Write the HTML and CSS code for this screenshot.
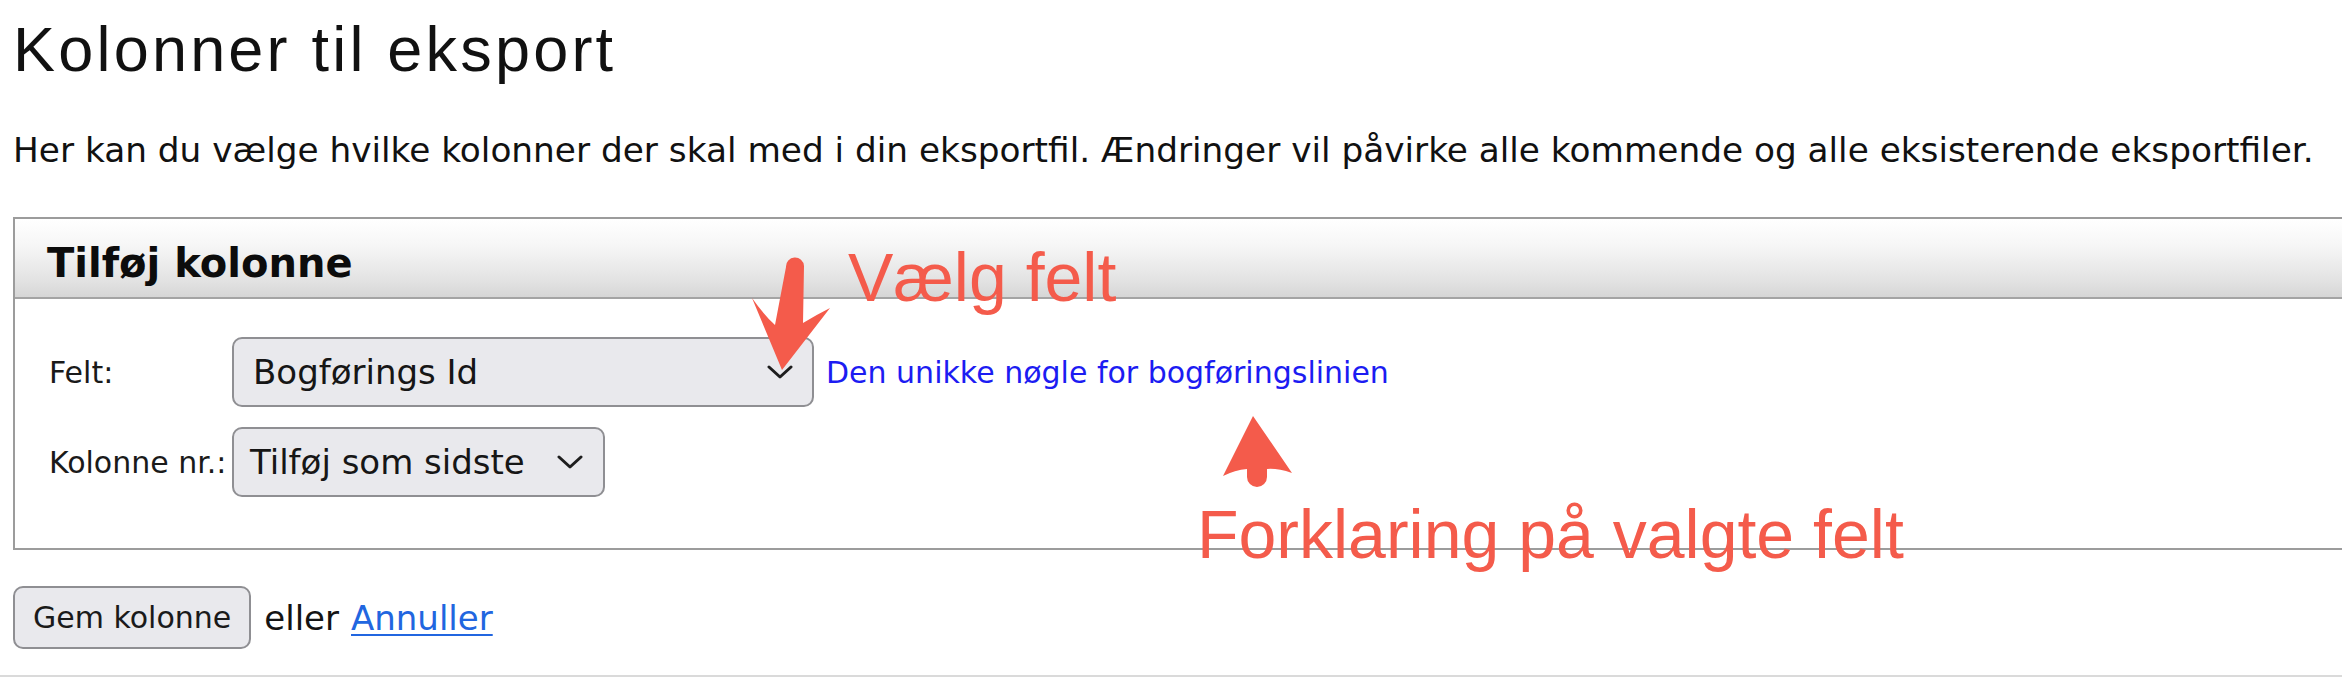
FILE: index.html
```html
<!DOCTYPE html>
<html lang="da">
<head>
<meta charset="utf-8">
<title>Kolonner til eksport</title>
<link rel="stylesheet" href="styles.css">
</head>
<body>
<div class="page">
  <h1 class="title">Kolonner til eksport</h1>
  <p class="intro">Her kan du vælge hvilke kolonner der skal med i din eksportfil. Ændringer vil påvirke alle kommende og alle eksisterende eksportfiler.</p>

  <section class="panel">
    <h2 class="panel-head">Tilføj kolonne</h2>
    <div class="panel-body">
      <span class="label">Felt:</span>
      <div class="select select-wide" role="combobox">
        <span>Bogførings Id</span>
        <svg class="chev" viewBox="0 0 26 14" width="26" height="14"><polyline points="2,2 13,12 24,2"/></svg>
      </div>
      <a class="hint">Den unikke nøgle for bogføringslinien</a>

      <span class="label">Kolonne nr.:</span>
      <div class="select select-auto" role="combobox">
        <span>Tilføj som sidste</span>
        <svg class="chev" viewBox="0 0 26 14" width="26" height="14"><polyline points="2,2 13,12 24,2"/></svg>
      </div>
      <span></span>
    </div>
  </section>

  <div class="actions">
    <button class="btn" type="button">Gem kolonne</button>
    <span class="or">eller</span>
    <a class="cancel" href="#">Annuller</a>
  </div>

  <div class="footer-line"></div>

  <div class="note note-select">Vælg felt</div>
  <svg class="arrow arrow-down" viewBox="0 0 100 125" width="100" height="125">
    <path d="M46,14 A9,9 0 0 1 64,13 L63,70 Q76,62 90,55 L42,117 L12,45 Q24,62 35,72 Z"/>
  </svg>

  <svg class="arrow arrow-up" viewBox="0 0 85 85" width="85" height="85">
    <path d="M38,8 L77,65 Q62,60 52,61 L52,69 A10,10 0 0 1 32,69 L32,61 Q20,62 8,68 Z"/>
  </svg>
  <div class="note note-hint">Forklaring på valgte felt</div>
</div>
</body>
</html>
```

FILE: styles.css
```css
html, body {
  margin: 0;
  padding: 0;
  background: #ffffff;
  overflow: hidden;
}

body {
  width: 2342px;
  height: 678px;
  font-family: "DejaVu Sans", Verdana, sans-serif;
  color: #141414;
}

.page {
  position: relative;
  padding: 0 0 0 13px;
  height: 678px;
}

.title {
  margin: 18px 0 0 0;
  font-family: "Liberation Sans", Arial, sans-serif;
  font-weight: normal;
  font-size: 63px;
  line-height: 63px;
  letter-spacing: 3.2px;
  color: #111111;
}

.intro {
  margin: 52px 0 0 0;
  font-size: 34.3px;
  line-height: 34px;
  white-space: nowrap;
  color: #111111;
}

.panel {
  margin: 50px -40px 0 0;
  border: 2px solid #9c9c9c;
}

.panel-head {
  margin: 0;
  padding: 24px 0 14px 32px;
  font-size: 40px;
  line-height: 40px;
  font-weight: bold;
  color: #0c0c0c;
  background: linear-gradient(#ffffff 0%, #f6f6f6 35%, #e2e2e2 80%, #d6d6d6 100%);
  border-bottom: 2px solid #a4a4a4;
}

.panel-body {
  display: grid;
  grid-template-columns: 183px auto 1fr;
  grid-auto-rows: 70px;
  row-gap: 20px;
  align-items: center;
  padding: 38px 0 51px 34px;
}

.label {
  font-size: 30px;
  color: #1a1a1a;
  white-space: nowrap;
}

.select {
  box-sizing: border-box;
  height: 70px;
  display: flex;
  align-items: center;
  justify-content: space-between;
  background: #e9e9ed;
  border: 2px solid #8f8f93;
  border-radius: 10px;
  font-size: 34px;
  color: #161616;
  white-space: nowrap;
}

.select-wide {
  width: 582px;
  padding: 0 19px 0 19px;
}

.select-auto {
  justify-self: start;
  gap: 32px;
  padding: 0 20px 0 16px;
}

.chev {
  flex: none;
}

.chev polyline {
  fill: none;
  stroke: #1e1e1e;
  stroke-width: 3;
  stroke-linecap: round;
  stroke-linejoin: round;
}

.hint {
  margin-left: 12px;
  font-size: 30px;
  color: #1c1cf2;
  white-space: nowrap;
}

.actions {
  display: flex;
  align-items: center;
  margin-top: 36px;
  font-size: 34px;
}

.btn {
  box-sizing: border-box;
  height: 63px;
  padding: 0 18px;
  font-family: "DejaVu Sans", Verdana, sans-serif;
  font-size: 30px;
  color: #1a1a1a;
  background: #e9e9ed;
  border: 2px solid #8f8f93;
  border-radius: 10px;
}

.or {
  margin-left: 13px;
  color: #141414;
}

.cancel {
  margin-left: 12px;
  color: #2166e0;
  text-decoration: underline;
  text-decoration-thickness: 2px;
  text-underline-offset: 4px;
}

.footer-line {
  margin: 26px 0 0 -13px;
  border-top: 2px solid #dadada;
}

.note {
  position: absolute;
  font-family: "Liberation Sans", Arial, sans-serif;
  font-size: 68px;
  line-height: 68px;
  color: #f45b4b;
  white-space: nowrap;
}

.note-select {
  left: 848px;
  top: 225px;
}

.note-hint {
  left: 1197px;
  top: 482px;
}

.arrow {
  position: absolute;
}

.arrow path {
  fill: #f45b4b;
}

.arrow-down {
  left: 740px;
  top: 235px;
}

.arrow-up {
  left: 1215px;
  top: 390px;
}
```
